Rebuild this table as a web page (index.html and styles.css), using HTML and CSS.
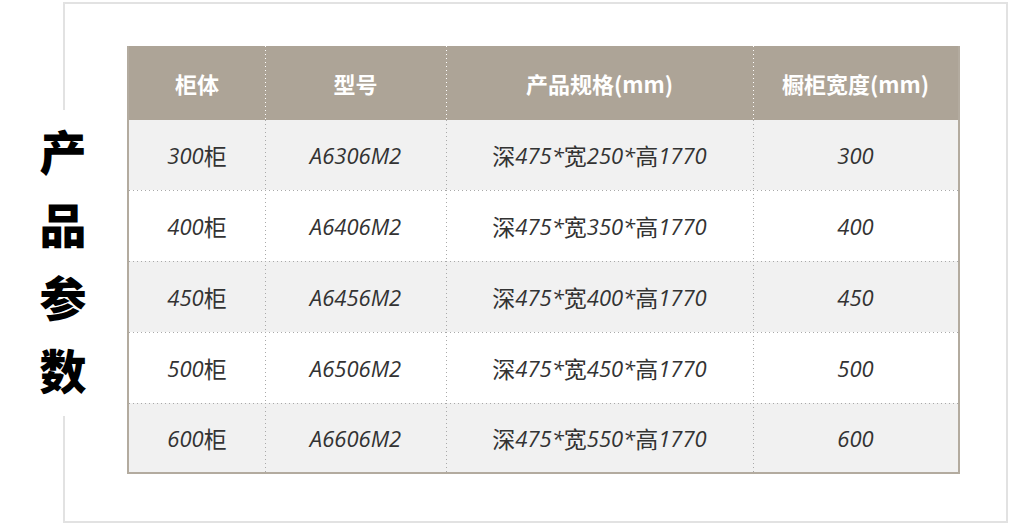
FILE: index.html
```html
<!DOCTYPE html>
<html lang="zh-CN">
<head>
<meta charset="utf-8">
<title>产品参数</title>
<link rel="stylesheet" href="styles.css">
</head>
<body>
<div class="frame">
  <div class="label"><span>产</span><span>品</span><span>参</span><span>数</span></div>
  <div class="table">
    <div class="cell head first">柜体</div>
    <div class="cell head">型号</div>
    <div class="cell head">产品规格(mm)</div>
    <div class="cell head">橱柜宽度(mm)</div>

    <div class="cell odd first">300<span class="cjk">柜</span></div>
    <div class="cell odd">A6306M2</div>
    <div class="cell odd"><span class="cjk">深</span>475*<span class="cjk">宽</span>250*<span class="cjk">高</span>1770</div>
    <div class="cell odd">300</div>

    <div class="cell even first sep">400<span class="cjk">柜</span></div>
    <div class="cell even sep">A6406M2</div>
    <div class="cell even sep"><span class="cjk">深</span>475*<span class="cjk">宽</span>350*<span class="cjk">高</span>1770</div>
    <div class="cell even sep">400</div>

    <div class="cell odd first sep">450<span class="cjk">柜</span></div>
    <div class="cell odd sep">A6456M2</div>
    <div class="cell odd sep"><span class="cjk">深</span>475*<span class="cjk">宽</span>400*<span class="cjk">高</span>1770</div>
    <div class="cell odd sep">450</div>

    <div class="cell even first sep">500<span class="cjk">柜</span></div>
    <div class="cell even sep">A6506M2</div>
    <div class="cell even sep"><span class="cjk">深</span>475*<span class="cjk">宽</span>450*<span class="cjk">高</span>1770</div>
    <div class="cell even sep">500</div>

    <div class="cell odd first sep">600<span class="cjk">柜</span></div>
    <div class="cell odd sep">A6606M2</div>
    <div class="cell odd sep"><span class="cjk">深</span>475*<span class="cjk">宽</span>550*<span class="cjk">高</span>1770</div>
    <div class="cell odd sep">600</div>
  </div>
</div>
</body>
</html>
```

FILE: styles.css
```css
html, body {
  margin: 0;
  padding: 0;
  background: #ffffff;
}

.frame {
  position: relative;
  box-sizing: border-box;
  margin: 2px 0 0 63px;
  width: 945px;
  height: 521px;
  border: 2px solid #e2e2e2;
  padding: 42px 0 0 62px;
}

.label {
  position: absolute;
  left: -30px;
  top: 106px;
  width: 56px;
  height: 306px;
  background: #ffffff;
  box-sizing: border-box;
  padding-top: 3px;
  display: flex;
  flex-direction: column;
  align-items: center;
  font-family: "Noto Sans CJK SC", sans-serif;
  font-weight: 900;
  font-size: 47px;
  line-height: 73px;
  color: #000000;
}

.table {
  display: grid;
  width: 833px;
  box-sizing: border-box;
  border: 2px solid #b3ab9f;
  border-top: 0;
  grid-template-columns: 136px 181px 307px 205px;
  grid-template-rows: 74px 70px 71px 71px 71px 69px;
}

.cell {
  display: flex;
  align-items: center;
  justify-content: center;
  font-family: "Open Sans", "Noto Sans CJK SC", sans-serif;
  font-style: italic;
  font-size: 22px;
  color: #333333;
  background-repeat: repeat-y, repeat-x;
  background-position: left top, left top;
  background-image:
    linear-gradient(to bottom, #a9a9a9 25%, transparent 25%),
    linear-gradient(to right, transparent 0, transparent 0);
  background-size: 1px 4px, 4px 1px;
}

.cjk {
  font-family: "Noto Sans CJK SC", sans-serif;
  font-style: normal;
  font-size: 23px;
}

.cell.first {
  background-image:
    linear-gradient(to bottom, transparent 0, transparent 0),
    linear-gradient(to right, transparent 0, transparent 0);
}

.cell.sep {
  background-image:
    linear-gradient(to bottom, #a9a9a9 25%, transparent 25%),
    linear-gradient(to right, #a9a9a9 25%, transparent 25%);
}

.cell.sep.first {
  background-image:
    linear-gradient(to bottom, transparent 0, transparent 0),
    linear-gradient(to right, #a9a9a9 25%, transparent 25%);
}

.cell.head {
  background-color: #ada497;
  font-family: "Noto Sans CJK SC", sans-serif;
  font-style: normal;
  font-weight: 700;
  font-size: 22px;
  color: #ffffff;
  background-image:
    linear-gradient(to bottom, #ffffff 25%, transparent 25%),
    linear-gradient(to right, transparent 0, transparent 0);
}

.cell.head.first {
  background-image: none;
}

.cell.odd {
  background-color: #f1f1f1;
}

.cell.even {
  background-color: #ffffff;
}
```
